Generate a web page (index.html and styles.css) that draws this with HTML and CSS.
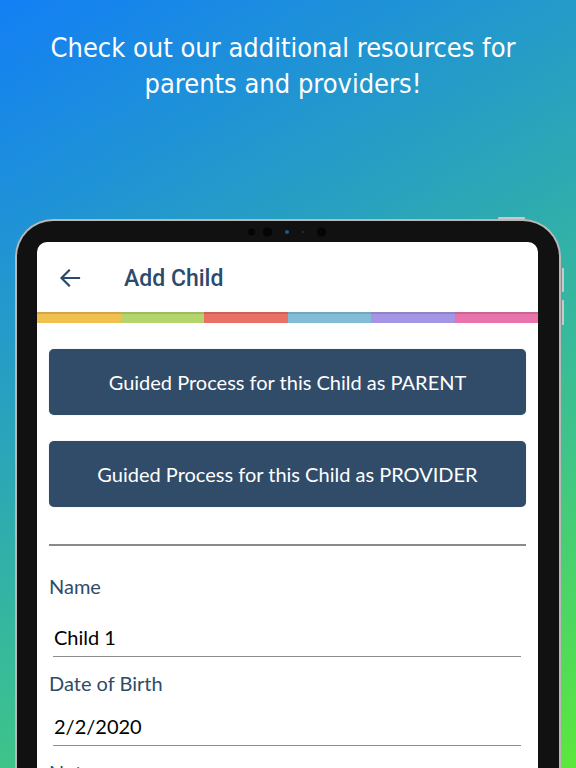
FILE: index.html
```html
<!DOCTYPE html>
<html>
<head>
<meta charset="utf-8">
<link rel="stylesheet" href="styles.css">
</head>
<body>
<div class="page">
  <h1 class="headline">Check out our additional resources for<br>parents and providers!</h1>
  <div class="device">
    <span class="btn-top"></span>
    <span class="btn-side btn-side-1"></span>
    <span class="btn-side btn-side-2"></span>
    <div class="cameras">
      <span class="cam cam-a"></span>
      <span class="cam cam-b"></span>
      <span class="cam cam-c"></span>
      <span class="cam cam-d"></span>
      <span class="cam cam-e"></span>
    </div>
    <div class="screen">
      <header class="appbar">
        <svg class="back" width="22" height="18" viewBox="0 0 22 18"><path d="M20 9H3M10 1.5L2.5 9l7.5 7.5" fill="none" stroke="#2c4a6b" stroke-width="2.2" stroke-linecap="square"/></svg>
        <span class="title">Add Child</span>
      </header>
      <div class="stripe">
        <span class="s1"></span><span class="s2"></span><span class="s3"></span><span class="s4"></span><span class="s5"></span><span class="s6"></span>
      </div>
      <main class="content">
        <button class="guide">Guided Process for this Child as PARENT</button>
        <button class="guide">Guided Process for this Child as PROVIDER</button>
        <hr class="divider">
        <label class="field-label label-name">Name</label>
        <div class="field field-name">Child 1</div>
        <label class="field-label label-dob">Date of Birth</label>
        <div class="field field-dob">2/2/2020</div>
        <label class="field-label label-notes">Notes</label>
      </main>
    </div>
  </div>
</div>
</body>
</html>
```
FILE: styles.css
```css
html, body {
  margin: 0;
  padding: 0;
}
body {
  width: 576px;
  height: 768px;
  overflow: hidden;
}
.page {
  width: 576px;
  height: 768px;
  overflow: hidden;
  background: linear-gradient(150deg, #137ff5 0%, #28a2be 38%, #3ec48a 70%, #5ce83c 100%);
  display: flex;
  flex-direction: column;
}
.headline {
  margin: 0;
  padding: 30px 10px 0 0;
  height: 219px;
  flex: none;
  box-sizing: border-box;
  text-align: center;
  color: #fff;
  font-family: "DejaVu Sans Condensed", "DejaVu Sans", sans-serif;
  font-stretch: condensed;
  font-weight: normal;
  font-size: 27px;
  line-height: 36px;
  letter-spacing: 0;
}
.device {
  position: relative;
  margin: 0 15px 0 15px;
  flex: 1;
  border: 2px solid #b8b8b8;
  border-bottom: none;
  border-radius: 38px 38px 0 0;
  background: #111;
  padding: 21px 21px 0 20px;
  display: flex;
  flex-direction: column;
}
.btn-top {
  position: absolute;
  top: -4px;
  right: 34px;
  width: 27px;
  height: 2px;
  background: #c9c9c9;
  border-radius: 1px 1px 0 0;
}
.btn-side {
  position: absolute;
  right: -5px;
  width: 2px;
  background: #c9c9c9;
  border-radius: 0 1px 1px 0;
}
.btn-side-1 { top: 47px; height: 24px; }
.btn-side-2 { top: 79px; height: 25px; }
.cameras {
  position: absolute;
  top: 6px;
  left: 228px;
  width: 90px;
  height: 10px;
}
.cam {
  position: absolute;
  border-radius: 50%;
  background: #000;
  top: 50%;
  transform: translateY(-50%);
}
.cam-a { left: 3px; width: 7px; height: 7px; background: #050505; }
.cam-b { left: 18px; width: 9px; height: 9px; background: #050505; }
.cam-c { left: 40px; width: 4px; height: 4px; background: #1c5a8a; }
.cam-d { left: 57px; width: 2px; height: 2px; background: #333; }
.cam-e { left: 72px; width: 9px; height: 9px; background: #050505; }
.screen {
  flex: 1;
  background: #fff;
  border-radius: 10px 10px 0 0;
  overflow: hidden;
  display: flex;
  flex-direction: column;
}
.appbar {
  height: 70px;
  flex: none;
  display: flex;
  align-items: center;
  padding-left: 22px;
  box-sizing: border-box;
  padding-top: 2px;
}
.back {
  display: block;
}
.title {
  margin-left: 43px;
  font-family: Roboto, sans-serif;
  font-weight: 500;
  font-size: 23px;
  color: #2c4a6b;
}
.stripe {
  height: 11px;
  flex: none;
  display: flex;
  position: relative;
}
.stripe::after {
  content: "";
  position: absolute;
  left: 0; right: 0; top: 0;
  height: 2px;
  background: rgba(0,0,0,0.12);
}
.stripe span { flex: 1; }
.s1 { background: #f0c050; }
.s2 { background: #b4d56b; }
.s3 { background: #e97065; }
.s4 { background: #83bdd5; }
.s5 { background: #a496e4; }
.s6 { background: #e874ab; }
.content {
  padding: 26px 12px 0 12px;
  display: flex;
  flex-direction: column;
}
.guide {
  height: 66px;
  flex: none;
  border: none;
  border-radius: 5px;
  background: #304c69;
  color: #fff;
  font-family: Lato, sans-serif;
  font-size: 20px;
  margin: 0 0 26px 0;
  padding: 0;
  box-shadow: 0 0 1px rgba(0,0,0,0.3);
}
.divider {
  margin: 11px 0 0 0;
  border: none;
  height: 1.5px;
  background: #8a8a8a;
}
.field-label {
  font-family: Lato, sans-serif;
  font-size: 20px;
  color: #2f4b68;
  line-height: 24px;
}
.label-name { margin-top: 28px; }
.label-dob { margin-top: 14px; }
.label-notes { margin-top: 14px; }
.field {
  margin: 0 5px 0 4px;
  font-family: Lato, sans-serif;
  font-size: 20px;
  color: #000;
  line-height: 24px;
  padding: 0 0 7px 1px;
  border-bottom: 1.5px solid #8c8c8c;
}
.field-name { margin-top: 27px; }
.field-dob { margin-top: 19px; }
```
